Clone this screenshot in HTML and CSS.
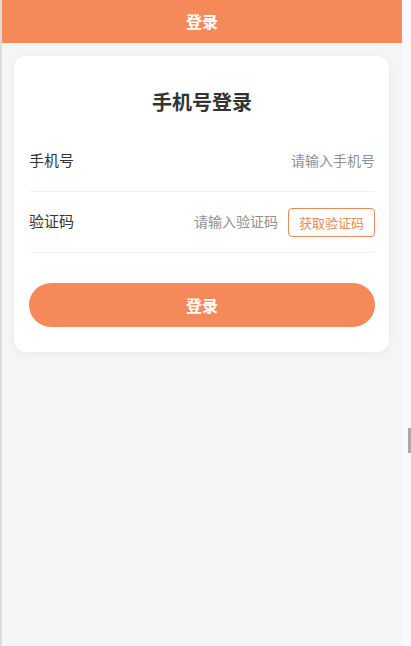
FILE: index.html
```html
<!DOCTYPE html>
<html lang="zh-CN">
<head>
  <meta charset="UTF-8">
  <title>登录</title>
  <link rel="stylesheet" href="styles.css">
</head>
<body>
  <div class="app">
    <div class="header">登录</div>

    <div class="card">
      <h2>手机号登录</h2>
      <div class="row">
        <span class="label">手机号</span>
        <input type="text" id="phone" placeholder="请输入手机号">
      </div>
      <div class="row">
        <span class="label">验证码</span>
        <input type="text" id="code" placeholder="请输入验证码">
        <button class="code-btn" onclick="getCode()">获取验证码</button>
      </div>
      <button class="login-btn" onclick="login()">登录</button>
    </div>
  </div>
  <div class="scroll-thumb"></div>

  <script>
    function getCode() {
      alert("验证码已发送");
    }
    function login() {
      alert("登录中...");
    }
  </script>
</body>
</html>
```

FILE: styles.css
```css
html, body {
  margin: 0;
  height: 100%;
}
body {
  background-color: #f7f9fc;
  font-family: "Noto Sans CJK SC", "Noto Sans", sans-serif;
  color: #333;
}
.app {
  width: 400px;
  min-height: 100%;
  background-color: #f5f5f5;
  border-left: 2px solid #dcdcdc;
  overflow: hidden;
}
.header {
  height: 43px;
  line-height: 43px;
  background-color: #f5895a;
  color: white;
  text-align: center;
  font-size: 16px;
  font-weight: bold;
}
.card {
  width: 375px;
  box-sizing: border-box;
  margin: 13px 0 0 12px;
  padding: 32px 14px 25px 15px;
  background-color: white;
  border-radius: 12px;
  box-shadow: 0 2px 10px rgba(0, 0, 0, 0.05);
}
h2 {
  margin: 0 0 15px;
  text-align: center;
  font-size: 20px;
  line-height: 28px;
  color: #333;
}
.row {
  display: flex;
  align-items: center;
  gap: 10px;
  height: 60px;
  border-bottom: 1px solid #f2f2f2;
}
.label {
  width: 80px;
  font-size: 15px;
  line-height: 20px;
  margin-top: -2px;
}
.row input {
  flex: 1;
  min-width: 0;
  border: none;
  outline: none;
  padding: 0;
  margin-top: -2px;
  text-align: right;
  font-family: inherit;
  font-size: 14px;
  color: #333;
}
.row input::placeholder {
  color: #8f8f8f;
}
.code-btn {
  height: 29px;
  padding: 0 10px;
  background-color: white;
  border: 1px solid #f0885a;
  border-radius: 4px;
  color: #f0885a;
  font-family: inherit;
  font-size: 13px;
  cursor: pointer;
}
.login-btn {
  display: block;
  width: 100%;
  height: 44px;
  margin-top: 30px;
  background-color: #f5895a;
  border: none;
  border-radius: 22px;
  color: white;
  font-family: inherit;
  font-size: 16px;
  font-weight: bold;
  cursor: pointer;
}
.scroll-thumb {
  position: fixed;
  left: 408px;
  top: 428px;
  width: 3px;
  height: 25px;
  background-color: #a8a8a8;
}
```
